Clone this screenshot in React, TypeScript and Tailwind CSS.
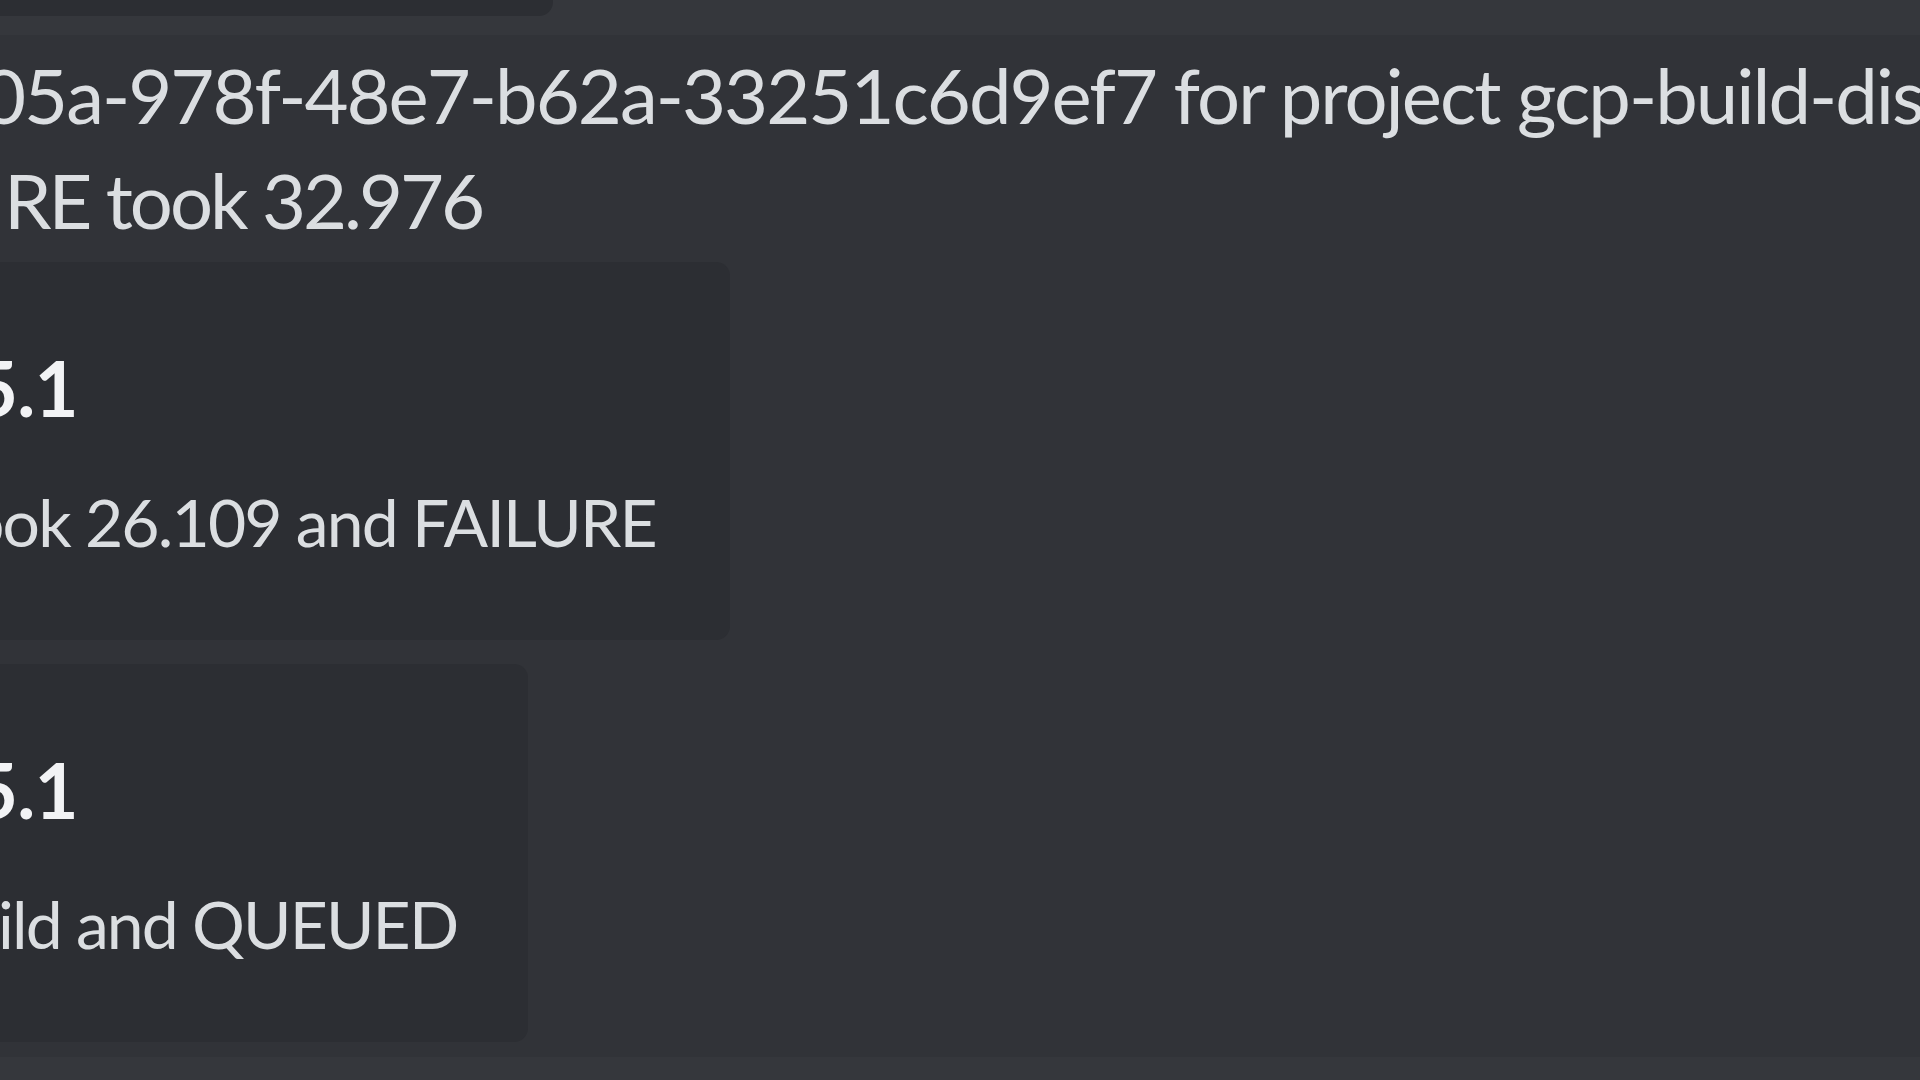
import React from "react";

type EmbedProps = {
  title: string;
  description: string;
  titleOffset: string;
  descOffset: string;
  width: string;
};

const Embed = ({ title, description, titleOffset, descOffset, width }: EmbedProps) => {
  return (
    <div
      className={`-ml-[40px] rounded-[14px] bg-[#2c2e33] pl-[40px] pt-[74px] pb-[76px] ${width}`}
    >
      <div
        className={`whitespace-nowrap text-[76px] font-bold leading-[104px] tracking-[-0.01em] text-[#f2f3f5] ${titleOffset}`}
      >
        {title}
      </div>
      <div
        className={`mt-[39px] whitespace-nowrap text-[66px] leading-[85px] tracking-[-0.028em] text-[#dbdee1] ${descOffset}`}
      >
        {description}
      </div>
    </div>
  );
};

const App = () => {
  return (
    <div className="h-screen w-full overflow-hidden bg-[#35373c] font-['Lato','Noto_Sans',sans-serif]">
      {/* bottom of the previous message's embed */}
      <div className="-ml-[60px] h-[16px] w-[613px] rounded-br-[14px] bg-[#2c2e33]" />

      <div className="mt-[19px] bg-[#313338] pt-[7px] pb-[15px]">
        <div className="text-[76px] leading-[105px] text-[#dbdee1]">
          <div className="-ml-[18px] whitespace-nowrap tracking-[-0.026em]">
            05a-978f-48e7-b62a-33251c6d9ef7 for project gcp-build-discord
          </div>
          <div className="ml-[4px] whitespace-nowrap tracking-[-0.04em]">RE took 32.976</div>
        </div>

        <div className="mt-[10px]">
          <Embed
            title="5.1"
            description="ook 26.109 and FAILURE"
            titleOffset="-ml-[26px]"
            descOffset="-ml-[33px]"
            width="w-[770px]"
          />
        </div>
        <div className="mt-[24px]">
          <Embed
            title="5.1"
            description="ild and QUEUED"
            titleOffset="-ml-[26px]"
            descOffset="-ml-[2px]"
            width="w-[568px]"
          />
        </div>
      </div>
    </div>
  );
};

export default App;
